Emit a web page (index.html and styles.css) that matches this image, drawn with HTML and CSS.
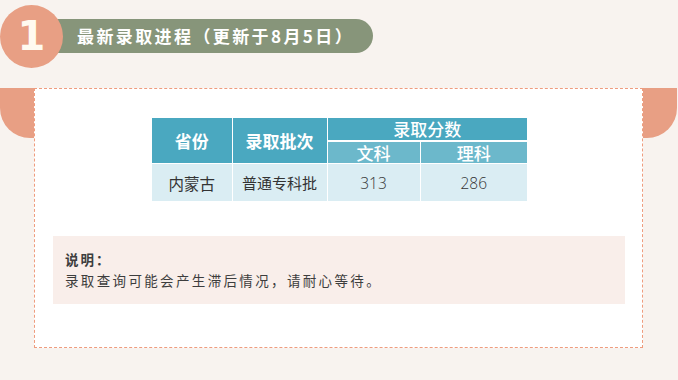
FILE: index.html
```html
<!DOCTYPE html>
<html lang="zh">
<head>
<meta charset="utf-8">
<link rel="stylesheet" href="styles.css">
</head>
<body>
<div class="page">
  <div class="head">
    <div class="num">1</div>
    <div class="pill">最新录取进程（更新于8月5日）</div>
  </div>
  <div class="card-row">
    <div class="tab tab-left"></div>
    <div class="card">
      <table class="score">
        <colgroup>
          <col class="c1"><col class="c2"><col class="c3"><col class="c4">
        </colgroup>
        <thead>
          <tr class="h1">
            <th rowspan="2" class="bold">省份</th>
            <th rowspan="2">录取批次</th>
            <th colspan="2" class="group">录取分数</th>
          </tr>
          <tr class="h2">
            <th class="sub">文科</th>
            <th class="sub">理科</th>
          </tr>
        </thead>
        <tbody>
          <tr>
            <td class="prov">内蒙古</td>
            <td>普通专科批</td>
            <td class="n">313</td>
            <td class="n">286</td>
          </tr>
        </tbody>
      </table>
      <div class="note">
        <div class="note-title">说明：</div>
        <div class="note-text">录取查询可能会产生滞后情况，请耐心等待。</div>
      </div>
    </div>
    <div class="tab tab-right"></div>
  </div>
</div>
</body>
</html>
```

FILE: styles.css
```css
html, body {
  margin: 0;
  padding: 0;
  background: #f8f3ef;
}
body {
  width: 678px;
  height: 380px;
  overflow: hidden;
  font-family: "Noto Sans CJK SC", "Noto Sans", sans-serif;
}
.page {
  padding-top: 4px;
}
.head {
  display: flex;
  align-items: center;
  height: 64px;
}
.num {
  position: relative;
  z-index: 2;
  width: 63px;
  height: 63px;
  border-radius: 50%;
  background: #e89f84;
  color: #fffaf0;
  font-family: "DejaVu Sans", sans-serif;
  font-weight: bold;
  font-size: 40px;
  line-height: 63px;
  text-align: center;
  flex: none;
}
.pill {
  margin-left: -8px;
  height: 34px;
  width: 296px;
  padding-left: 22px;
  border-radius: 0 17px 17px 0;
  background: #87957a;
  color: #ffffff;
  font-weight: bold;
  font-size: 17px;
  letter-spacing: 2.4px;
  line-height: 34px;
  box-sizing: content-box;
  white-space: nowrap;
}
.card-row {
  display: flex;
  margin-top: 20px;
  align-items: flex-start;
}
.tab {
  width: 34px;
  height: 50px;
  background: #e89f84;
  flex: none;
}
.tab-left {
  border-radius: 0 0 0 30px;
}
.tab-right {
  border-radius: 0 0 30px 0;
}
.card {
  width: 607px;
  height: 229px;
  border: 1px dashed #ef9c7e;
  background: #ffffff;
  padding-top: 29px;
  box-sizing: content-box;
}
.score {
  margin: 0 auto;
  border-collapse: collapse;
  width: 375px;
  table-layout: fixed;
  position: relative;
  left: 1px;
}
.c1 { width: 80px; }
.c2 { width: 95px; }
.c3 { width: 93px; }
.c4 { width: 107px; }
.score th {
  background: #4aa8c0;
  color: #ffffff;
  font-size: 17px;
  font-weight: 600;
  border: 1px solid #ffffff;
  border-top: none;
  padding: 0;
}
.score tr th:first-child,
.score tr td:first-child {
  border-left: none;
}
.score th:last-child, .score td:last-child {
  border-right: none;
}
.score .h1 th.group {
  height: 22px;
  line-height: 22px;
  font-weight: 500;
  border-bottom: 2px solid #ffffff;
}
.score .h2 th {
  height: 21px;
  line-height: 21px;
  background: #6cb8cb;
  font-weight: 500;
  border-bottom: 1px solid #ffffff;
}
.score .h1 th[rowspan] {
  border-bottom: 1px solid #ffffff;
}
.score td {
  background: #daedf3;
  color: #333333;
  font-size: 15px;
  height: 37px;
  text-align: center;
  padding: 0;
  border-right: 1px solid #ffffff;
}
.score td.prov {
  font-size: 15.5px;
}
.score td.n {
  font-family: "Open Sans", sans-serif;
  font-weight: 300;
  font-size: 15.5px;
  color: #333333;
}
.note {
  margin: 35px 17px 0 18px;
  height: 68px;
  box-sizing: border-box;
  padding: 13px 12px 0;
  background: #f9eeea;
  color: #3d3d3d;
  font-size: 13.5px;
  line-height: 21px;
}
.note-title {
  font-weight: bold;
  letter-spacing: 2px;
}
.note-text {
  letter-spacing: 2.35px;
}
```
